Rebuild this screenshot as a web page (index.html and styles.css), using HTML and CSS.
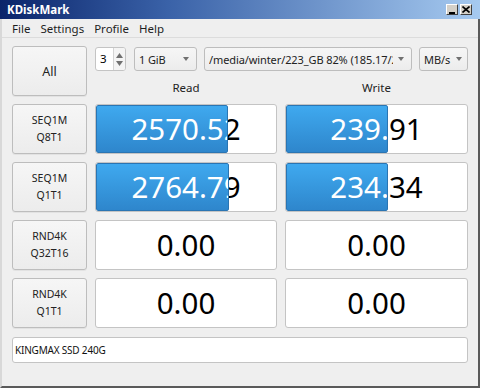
FILE: index.html
```html
<!DOCTYPE html>
<html>
<head>
<meta charset="utf-8">
<link rel="stylesheet" href="styles.css">
</head>
<body>
<div class="window">
  <div class="titlebar">
    <span class="title">KDiskMark</span>
    <div class="tbuttons">
      <span class="tbtn"><svg width="8" height="8" viewBox="0 0 8 8"><rect x="1" y="6" width="6" height="2" fill="#000"/></svg></span>
      <span class="tbtn"><svg width="8" height="7" viewBox="0 0 8 7"><path d="M0.5 0.5 L7.5 6.5 M7.5 0.5 L0.5 6.5" stroke="#000" stroke-width="1.6"/></svg></span>
    </div>
  </div>
  <div class="menubar">
    <span class="menu">File</span>
    <span class="menu">Settings</span>
    <span class="menu">Profile</span>
    <span class="menu">Help</span>
  </div>
  <div class="content">
    <div class="grid">
      <button class="btn all">All</button>
      <div class="top">
        <div class="controls">
          <div class="spin">
            <span class="spinval">3</span>
            <span class="spinarrows">
              <svg width="7" height="5" viewBox="0 0 7 5"><path d="M0 5 L3.5 0 L7 5Z" fill="#707070"/></svg>
              <svg width="7" height="5" viewBox="0 0 7 5"><path d="M0 0 L3.5 5 L7 0Z" fill="#707070"/></svg>
            </span>
          </div>
          <div class="combo size"><span class="ctext">1 GiB</span><span class="carrow"></span></div>
          <div class="combo path"><span class="ctext">/media/winter/223_GB 82% (185.17/2</span><span class="carrow"></span></div>
          <div class="combo unit"><span class="ctext">MB/s</span><span class="carrow"></span></div>
        </div>
        <div class="labels">
          <span class="label">Read</span>
          <span class="label">Write</span>
        </div>
      </div>

      <button class="btn test">SEQ1M<br>Q8T1</button>
      <div class="result"><div class="val">2570.52</div><div class="bar" style="width:132px"><div class="val inv r">2570.52</div></div></div>
      <div class="result"><div class="val">239.91</div><div class="bar" style="width:102px"><div class="val inv w">239.91</div></div></div>

      <button class="btn test">SEQ1M<br>Q1T1</button>
      <div class="result"><div class="val">2764.79</div><div class="bar" style="width:133px"><div class="val inv r">2764.79</div></div></div>
      <div class="result"><div class="val">234.34</div><div class="bar" style="width:102px"><div class="val inv w">234.34</div></div></div>

      <button class="btn test">RND4K<br>Q32T16</button>
      <div class="result"><div class="val">0.00</div></div>
      <div class="result"><div class="val">0.00</div></div>

      <button class="btn test">RND4K<br>Q1T1</button>
      <div class="result"><div class="val">0.00</div></div>
      <div class="result"><div class="val">0.00</div></div>
    </div>
    <div class="devfield">KINGMAX SSD 240G</div>
  </div>
</div>
</body>
</html>
```
FILE: styles.css
```css
* { box-sizing: border-box; }
html, body { margin: 0; padding: 0; }
body {
  width: 480px;
  height: 388px;
  overflow: hidden;
  font-family: "Noto Sans", sans-serif;
  background: #efefef;
}
.window {
  width: 480px;
  height: 388px;
  background: #efefef;
  border-left: 2px solid #d8d8d8;
  border-right: 2px solid #5a5a5a;
  border-bottom: 2px solid #5a5a5a;
  display: flex;
  flex-direction: column;
}
.titlebar {
  height: 19px;
  margin-left: -2px;
  margin-right: -2px;
  background: linear-gradient(to right, #0a246a 0%, #3a62a8 35%, #a6caf0 100%);
  display: flex;
  align-items: center;
  justify-content: space-between;
  padding: 0 8px 0 7px;
}
.title {
  color: #fff;
  font-weight: bold;
  font-size: 11.5px;
}
.tbuttons { display: flex; gap: 2px; }
.tbtn {
  width: 12px;
  height: 11px;
  background: #d4d0c8;
  border: 1px solid;
  border-color: #fff #404040 #404040 #fff;
  display: flex;
  align-items: center;
  justify-content: center;
}
.menubar {
  height: 19px;
  display: flex;
  align-items: center;
  padding-left: 10px;
  gap: 10px;
  border-bottom: 1px solid #dcdcdc;
  font-size: 11.5px;
  color: #1e1e1e;
}
.content {
  padding: 8px 10px 0 10px;
  display: flex;
  flex-direction: column;
  gap: 9px;
}
.grid {
  display: grid;
  grid-template-columns: 75px 182px 183px;
  grid-auto-rows: 50px;
  gap: 8px;
}
.btn {
  font-family: inherit;
  margin: 0;
  padding: 0;
  border: 1px solid #bdbdbd;
  border-radius: 3px;
  background: linear-gradient(#f6f6f6, #ececec);
  color: #222;
  box-shadow: 0 1px 0 rgba(0,0,0,0.05);
}
.all { font-size: 12.5px; }
.test { font-size: 10.5px; line-height: 17px; }
.top {
  grid-column: 2 / span 2;
  display: flex;
  flex-direction: column;
  padding-top: 1px;
}
.controls {
  height: 24px;
  display: flex;
  gap: 8px;
}
.spin {
  flex: none;
  width: 31px;
  background: #fff;
  border: 1px solid #c4c4c4;
  border-radius: 3px;
  display: flex;
  font-size: 11.5px;
}
.spinval { flex: 1; padding-left: 4px; line-height: 22px; }
.spinarrows {
  width: 12px;
  border-left: 1px solid #d4d4d4;
  display: flex;
  flex-direction: column;
  align-items: center;
  justify-content: center;
  gap: 3px;
  background: #f4f4f4;
  border-radius: 0 2px 2px 0;
}
.combo {
  flex: none;
  border: 1px solid #bdbdbd;
  border-radius: 3px;
  background: linear-gradient(#f6f6f6, #ececec);
  display: flex;
  align-items: center;
  font-size: 11px;
  letter-spacing: -0.1px;
  color: #222;
  padding: 0 7px 0 4px;
  overflow: hidden;
}
.ctext { flex: 1; min-width: 0; white-space: nowrap; overflow: hidden; }
.carrow {
  width: 0; height: 0;
  border-left: 3.5px solid transparent;
  border-right: 3.5px solid transparent;
  border-top: 4px solid #707070;
  margin-left: 5px;
  flex: none;
}
.size { width: 63px; }
.path { width: 208px; margin-left: -1px; }
.unit { width: 49px; margin-left: -1px; padding-right: 5px; }
.unit .carrow { margin-left: 3px; }
.labels {
  display: grid;
  grid-template-columns: 182px 183px;
  gap: 8px;
  margin-top: 9px;
  font-size: 11.5px;
  color: #222;
}
.label { text-align: center; line-height: 16px; }
.result {
  position: relative;
  background: #fff;
  border: 1px solid #c4c4c4;
  border-radius: 3px;
  overflow: hidden;
}
.val {
  font-size: 29.5px;
  line-height: 48px;
  text-align: center;
  color: #000;
  white-space: nowrap;
}
.bar {
  position: absolute;
  left: 0; top: 0; bottom: 0;
  overflow: hidden;
  background: linear-gradient(#3fa9ef, #2e86cc);
  border: 1px solid #2a75b3;
  border-radius: 2px;
}
.inv { color: #fff; margin: -1px 0 0 -1px; }
.inv.r { width: 180px; }
.inv.w { width: 181px; }
.devfield {
  height: 26px;
  background: #fff;
  border: 1px solid #c4c4c4;
  border-radius: 3px;
  font-size: 10px;
  letter-spacing: -0.2px;
  color: #111;
  line-height: 24px;
  padding-left: 2px;
}
```
